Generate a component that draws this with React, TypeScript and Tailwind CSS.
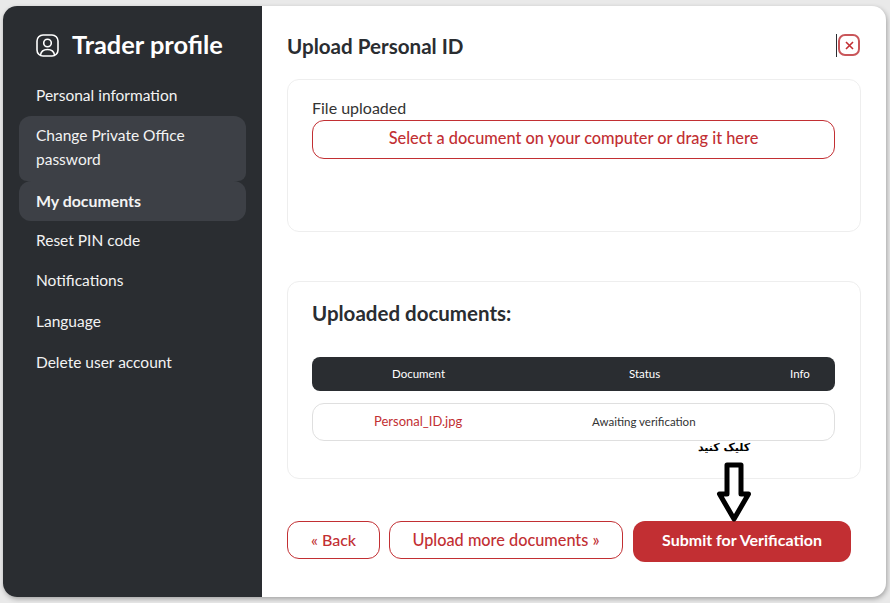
const font = { fontFamily: '"Lato", "Noto Sans", sans-serif' };

const menu = [
  { label: "Personal information", cls: "h-[42px] items-center" },
  { label: "Change Private Office password", cls: "h-[65px] items-center pb-1 bg-[#3d4046] rounded-t-xl rounded-b-lg" },
  { label: "My documents", cls: "h-[40px] items-center pb-px bg-[#3d4046] rounded-xl font-bold text-[15.9px]" },
  { label: "Reset PIN code", cls: "h-[38px] items-center" },
  { label: "Notifications", cls: "h-[42px] items-center" },
  { label: "Language", cls: "h-[40px] items-center" },
  { label: "Delete user account", cls: "h-[41px] items-center" },
];

function Sidebar() {
  return (
    <div className="w-[259px] shrink-0 bg-[#2a2d31] pl-4 pr-4 pt-6 text-[#f3f3f3]">
      <div className="flex items-center gap-[13px] pl-[17px] h-[30px]">
        <svg width="23" height="23" viewBox="0 0 23 23" fill="none" stroke="white" strokeWidth="1.6">
          <rect x="1" y="1" width="21" height="21" rx="6" />
          <circle cx="11.5" cy="9" r="3.8" />
          <path d="M4.5 21c.6-4 3.400-5.500 7-5.500s6.400 1.500 7 5.500" />
        </svg>
        <h1 className="-mt-[2px] text-[25.4px] font-bold text-white">Trader profile</h1>
      </div>
      <ul className="mt-[14px] w-[227px]">
        {menu.map((m) => (
          <li key={m.label} className={`flex px-[17px] text-[15.5px] leading-[24px] ${m.cls}`}>
            <span>{m.label}</span>
          </li>
        ))}
      </ul>
    </div>
  );
}

function UploadCard() {
  return (
    <div className="h-[153px] rounded-xl border border-[#eeeeee] pl-6 pr-[25px] pt-4">
      <div className="text-[16px] leading-[24px] text-[#333]">File uploaded</div>
      <div className="flex h-[39px] items-center justify-center rounded-xl border border-[#c22f33] pb-[2px] text-[16.35px] font-medium text-[#c22f33]">
        Select a document on your computer or drag it here
      </div>
    </div>
  );
}

function DocumentsCard() {
  return (
    <div className="mt-[49px] h-[198px] rounded-xl border border-[#eeeeee] pl-6 pr-[25px] pt-[17px]">
      <h2 className="text-[20.5px] leading-[28px] font-bold text-[#2a2d31]">Uploaded documents:</h2>
      <div className="mt-[30px] flex h-[34px] items-center rounded-lg bg-[#2a2d31] text-[11.5px] text-white">
        <span className="ml-[80px] w-[237px]">Document</span>
        <span className="w-[161px]">Status</span>
        <span>Info</span>
      </div>
      <div className="mt-3 flex h-[38px] items-center rounded-xl border border-[#dfdfdf] text-[11.5px]">
        <span className="ml-[61px] w-[218px] text-[13px] text-[#c22f33]">Personal_ID.jpg</span>
        <span className="text-[#333]">Awaiting verification</span>
      </div>
    </div>
  );
}

export default function App() {
  return (
    <div className="h-[603px] w-[890px] bg-[#e9e9e9] pl-[3px] pr-1 pt-[6px] pb-[6px]" style={font}>
      <div className="relative flex h-[591px] overflow-hidden rounded-[14px] bg-white shadow-[1px_2px_5px_rgba(0,0,0,0.3)]">
        <Sidebar />
        <div className="flex-1 pl-[25px] pr-[25px] pt-[27px]">
          <div className="flex h-[26px] items-center justify-between">
            <h2 className="text-[20.6px] font-bold text-[#2a2d31]">Upload Personal ID</h2>
            <div className="-mt-[2px] mr-px flex items-center gap-px">
              <div className="h-[23px] w-px bg-[#2a2d31]" />
              <button className="flex h-[22px] w-[22px] items-center justify-center rounded-[7px] border-2 border-[#c9565a]">
                <svg width="9" height="9" viewBox="0 0 9 9" stroke="#c22f33" strokeWidth="1.6">
                  <path d="M1 1l7 7M8 1L1 8" />
                </svg>
              </button>
            </div>
          </div>
          <div className="mt-5">
            <UploadCard />
            <DocumentsCard />
          </div>
          <div className="mt-[42px] flex gap-[9px]">
            <button className="h-[38px] w-[93px] rounded-xl border border-[#c22f33] text-[16px] font-medium text-[#c22f33]">« Back</button>
            <button className="h-[38px] w-[234px] rounded-xl border border-[#c22f33] text-[16.3px] font-medium text-[#c22f33]">Upload more documents »</button>
            <button className="ml-px h-[41px] w-[218px] rounded-xl bg-[#c22f33] pb-1 text-[16px] font-bold text-white">Submit for Verification</button>
          </div>
        </div>
        {/* annotation drawn over the page */}
        <span dir="rtl" className="absolute left-[695px] top-[433px] text-[11px] font-bold leading-[18px] text-black" style={{ fontFamily: '"DejaVu Sans", sans-serif' }}>کلیک کنید</span>
        <svg className="absolute left-[713px] top-[453px]" width="36" height="66" viewBox="0 0 36 66" fill="white" stroke="black" strokeWidth="5">
          <path d="M11 6H25V35H32.500L18 60L3.500 35H11Z" strokeLinejoin="round" />
        </svg>
      </div>
    </div>
  );
}
